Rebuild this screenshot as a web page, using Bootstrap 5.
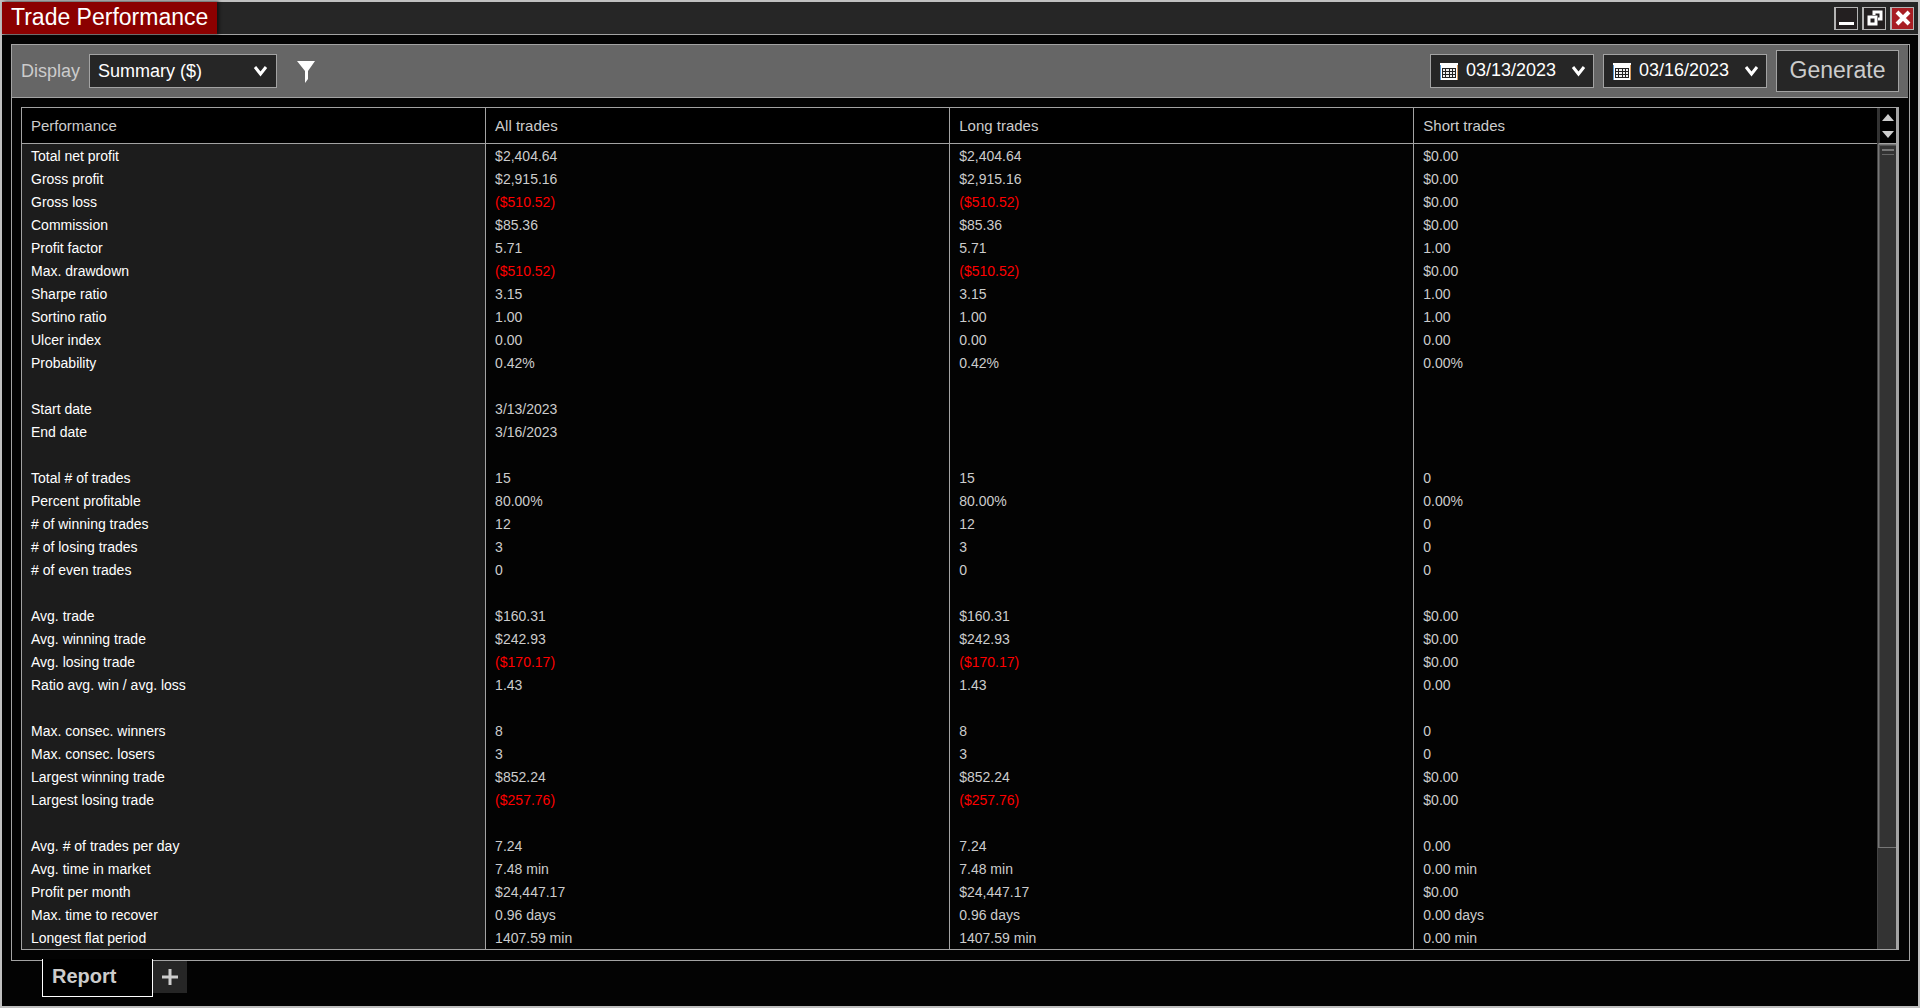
<!DOCTYPE html>
<html lang="en">
<head>
<meta charset="utf-8">
<meta name="viewport" content="width=device-width, initial-scale=1">
<title>Trade Performance</title>
<link href="https://cdn.jsdelivr.net/npm/bootstrap@5.3.0/dist/css/bootstrap.min.css" rel="stylesheet">
<style>
  :root { --line: #a3a3a3; --ink: #cccccc; --face: #262626; }
  body { font-family: "Liberation Sans", Arial, sans-serif; background: #030303; color: var(--ink); }
  .app-window { border: 2px solid #c0c0c0; background: #030303; }
  .title-bar { height: 33px; background: var(--face); border-bottom: 1px solid var(--line); }
  .title-name { background: #8b0000; color: #fff; font-size: 23px; line-height: 30px; padding: 0 9px 2px; box-shadow: 2px 0 3px #111; }
  .win-btn { width: 24px; height: 23px; padding: 0; border: 1px solid #b4b4b4; border-left-width: 2px; background: #231f20; display: flex; align-items: center; justify-content: center; }
  .win-btn.close-btn { background: #a81e24; }
  .report-panel { margin: 9px 8px 0 9px; border: 1px solid var(--line); min-height: 0; }
  .tool-bar { height: 53px; background: #666; border-bottom: 1px solid var(--line); padding: 0 9px; font-size: 18px; margin-right: 1px; }
  .tool-group { gap: 9px; }
  .field-box { height: 34px; background: var(--face); border: 1px solid var(--line); color: #fff; }
  .display-box { width: 188px; }
  .display-box select { appearance: none; width: 100%; height: 100%; padding: 0 32px 0 8px; border: 0; background: transparent; color: #fff; }
  .display-box svg { position: absolute; right: 8px; top: 10px; pointer-events: none; }
  .date-box { width: 164px; padding: 0 7px 0 9px; }
  .date-box input { width: 96px; padding: 0 0 2px; border: 0; background: transparent; color: #fff; }
  .plain-btn { border: 0; padding: 0; background: transparent; color: inherit; display: flex; }
  .generate-btn { width: 123px; height: 42px; padding: 0 0 2px; background: var(--face); border: 1px solid var(--line); color: var(--ink); font-size: 23px; }
  .grid-frame { margin: 9px 10px 10px 9px; border: 1px solid var(--line); min-height: 0; }
  .grid-view { min-width: 0; overflow: hidden; }
  .report-grid { width: 100%; table-layout: fixed; border-collapse: separate; border-spacing: 0; font-size: 14px; line-height: 22px; }
  .report-grid col.wide { width: 25.02%; }
  .report-grid th, .report-grid td { height: 23px; padding: 1px 9px 0; border-right: 1px solid var(--line); font-weight: 400; white-space: nowrap; }
  .report-grid th:last-child, .report-grid td:last-child { border-right: 0; }
  .report-grid thead th { height: 36px; background: #000; border-bottom: 1px solid var(--line); font-size: 15px; }
  .report-grid tbody th { background: #1c1c1c; color: #fff; }
  .report-grid .loss { color: #f00; }
  .scroll-rail { width: 21px; border-right: 2px solid var(--line); }
  .rail-arrows { height: 36px; gap: 10px; background: #000; border-left: 3px solid #333; border-bottom: 1px solid var(--line); }
  .rail-track { background: #333; border-left: 1px solid #444; }
  .rail-thumb { height: 87.5%; border: 1px solid #777; border-right: 0; box-shadow: inset 1px 1px #555; padding: 4px 2px 0 3px; }
  .rail-grip { height: 6px; border-top: 2px solid #777; border-bottom: 1px solid #666; }
  .tab-strip { height: 45px; padding-left: 40px; }
  .report-tab { position: relative; width: 111px; height: 38px; margin-top: -2px; padding: 0 9px 4px; border: 1px solid #fff; border-top: 0; background: #000; color: var(--ink); font-size: 20px; font-weight: 700; text-align: left; }
  .add-tab { width: 34px; height: 32px; background: var(--face); align-items: center; justify-content: center; }
</style>
<script src="https://cdn.jsdelivr.net/npm/bootstrap@5.3.0/dist/js/bootstrap.bundle.min.js"></script>
</head>
<body>
<div class="app-window vh-100 d-flex flex-column">
  <header class="title-bar d-flex justify-content-between flex-shrink-0">
    <h1 class="title-name m-0 fw-normal">Trade Performance</h1>
    <div class="d-flex gap-1 align-items-center me-1">
      <button class="win-btn" type="button" aria-label="Minimize"><svg width="16" height="16"><path d="M0 12h15v3H0z" fill="#fff"/></svg></button>
      <button class="win-btn" type="button" aria-label="Restore"><svg width="16" height="16" fill="none" stroke="#fff" stroke-width="3"><path d="M7 5V2h7v7h-3M2 7h7v7H2z"/></svg></button>
      <button class="win-btn close-btn" type="button" aria-label="Close"><svg width="16" height="16"><path d="M2 2l12 12M14 2L2 14" stroke="#fff" stroke-width="4"/></svg></button>
    </div>
  </header>

  <main class="report-panel flex-grow-1 d-flex flex-column">
    <div class="tool-bar d-flex align-items-center flex-shrink-0">
      <div class="tool-group d-flex align-items-center">
        <label for="display">Display</label>
        <div class="field-box display-box position-relative">
          <select id="display"><option>Summary ($)</option></select>
          <svg width="15" height="12"><path d="M2 2l5.500 7L13 2" fill="none" stroke="#fff" stroke-width="3"/></svg>
        </div>
      </div>
      <button class="plain-btn ms-3" type="button" aria-label="Filter"><svg width="26" height="24"><path d="M4 2h18l-7 10v8l-3 4V12z" fill="#fff"/></svg></button>
      <div class="tool-group d-flex align-items-center ms-auto">
        <div class="field-box date-box d-flex align-items-center">
          <svg width="18" height="17"><use href="#calendar"/></svg>
          <input class="ms-2" type="text" value="03/13/2023" aria-label="From date">
          <button class="plain-btn ms-auto" type="button" aria-label="Choose from date"><svg width="15" height="12"><path d="M2 2l5.500 7L13 2" fill="none" stroke="#fff" stroke-width="3"/></svg></button>
        </div>
        <div class="field-box date-box d-flex align-items-center">
          <svg width="18" height="17"><use href="#calendar"/></svg>
          <input class="ms-2" type="text" value="03/16/2023" aria-label="To date">
          <button class="plain-btn ms-auto" type="button" aria-label="Choose to date"><svg width="15" height="12"><path d="M2 2l5.500 7L13 2" fill="none" stroke="#fff" stroke-width="3"/></svg></button>
        </div>
        <button class="generate-btn" type="button">Generate</button>
      </div>
    </div>

    <div class="grid-frame d-flex flex-grow-1">
      <div class="grid-view flex-grow-1">
        <table class="report-grid">
          <colgroup><col class="wide"><col class="wide"><col class="wide"><col></colgroup>
          <thead><tr><th scope="col">Performance</th><th scope="col">All trades</th><th scope="col">Long trades</th><th scope="col">Short trades</th></tr></thead>
          <tbody id="rows"></tbody>
        </table>
      </div>
      <div class="scroll-rail d-flex flex-column flex-shrink-0" aria-hidden="true">
        <div class="rail-arrows d-flex flex-column align-items-center justify-content-center flex-shrink-0">
          <svg width="12" height="7"><path d="M0 7l6-7 6 7z" fill="#ccc"/></svg>
          <svg width="12" height="7"><path d="M0 0l6 7 6-7z" fill="#ccc"/></svg>
        </div>
        <div class="rail-track flex-grow-1"><div class="rail-thumb"><div class="rail-grip"></div></div></div>
      </div>
    </div>
  </main>

  <nav class="tab-strip d-flex align-items-start flex-shrink-0" aria-label="Reports">
    <button class="report-tab" type="button">Report</button>
    <button class="plain-btn add-tab" type="button" aria-label="Add tab"><svg width="16" height="16"><path d="M0 8h16M8 0v16" stroke="#ccc" stroke-width="3"/></svg></button>
  </nav>
</div>

<svg width="0" height="0" class="position-absolute">
  <symbol id="calendar" viewBox="0 0 18 17">
    <path d="M0 0h18v17H0z" fill="#fff"/>
    <path d="M2 5h14v10H2z" fill="#222"/>
    <path d="M3 6h2v2H3zm3 0h3v2H6zm4 0h2v2h-2zm3 0h2v2h-2zM3 9h2v2H3zm3 0h3v2H6zm4 0h2v2h-2zm3 0h2v2h-2zM3 12h2v2H3zm3 0h3v2H6zm4 0h2v2h-2zm3 0h2v2h-2z" fill="#eee"/>
    <path d="M0 2h1v15H0z" fill="#5b9bd5"/><path d="M17 2h1v15h-1z" fill="#d99a5b"/>
  </symbol>
</svg>

<script>
  const data = [
    ["Total net profit", "$2,404.64", "$2,404.64", "$0.00"],
    ["Gross profit", "$2,915.16", "$2,915.16", "$0.00"],
    ["Gross loss", "($510.52)", "($510.52)", "$0.00"],
    ["Commission", "$85.36", "$85.36", "$0.00"],
    ["Profit factor", "5.71", "5.71", "1.00"],
    ["Max. drawdown", "($510.52)", "($510.52)", "$0.00"],
    ["Sharpe ratio", "3.15", "3.15", "1.00"],
    ["Sortino ratio", "1.00", "1.00", "1.00"],
    ["Ulcer index", "0.00", "0.00", "0.00"],
    ["Probability", "0.42%", "0.42%", "0.00%"],
    ["", "", "", ""],
    ["Start date", "3/13/2023", "", ""],
    ["End date", "3/16/2023", "", ""],
    ["", "", "", ""],
    ["Total # of trades", "15", "15", "0"],
    ["Percent profitable", "80.00%", "80.00%", "0.00%"],
    ["# of winning trades", "12", "12", "0"],
    ["# of losing trades", "3", "3", "0"],
    ["# of even trades", "0", "0", "0"],
    ["", "", "", ""],
    ["Avg. trade", "$160.31", "$160.31", "$0.00"],
    ["Avg. winning trade", "$242.93", "$242.93", "$0.00"],
    ["Avg. losing trade", "($170.17)", "($170.17)", "$0.00"],
    ["Ratio avg. win / avg. loss", "1.43", "1.43", "0.00"],
    ["", "", "", ""],
    ["Max. consec. winners", "8", "8", "0"],
    ["Max. consec. losers", "3", "3", "0"],
    ["Largest winning trade", "$852.24", "$852.24", "$0.00"],
    ["Largest losing trade", "($257.76)", "($257.76)", "$0.00"],
    ["", "", "", ""],
    ["Avg. # of trades per day", "7.24", "7.24", "0.00"],
    ["Avg. time in market", "7.48 min", "7.48 min", "0.00 min"],
    ["Profit per month", "$24,447.17", "$24,447.17", "$0.00"],
    ["Max. time to recover", "0.96 days", "0.96 days", "0.00 days"],
    ["Longest flat period", "1407.59 min", "1407.59 min", "0.00 min"]
  ];
  const body = document.getElementById("rows");
  for (const [name, ...values] of data) {
    const tr = body.insertRow();
    const th = document.createElement("th");
    th.scope = "row";
    th.textContent = name;
    tr.append(th);
    for (const v of values) {
      const td = tr.insertCell();
      td.textContent = v;
      if (v.startsWith("(")) td.className = "loss";
    }
  }
</script>
</body>
</html>
